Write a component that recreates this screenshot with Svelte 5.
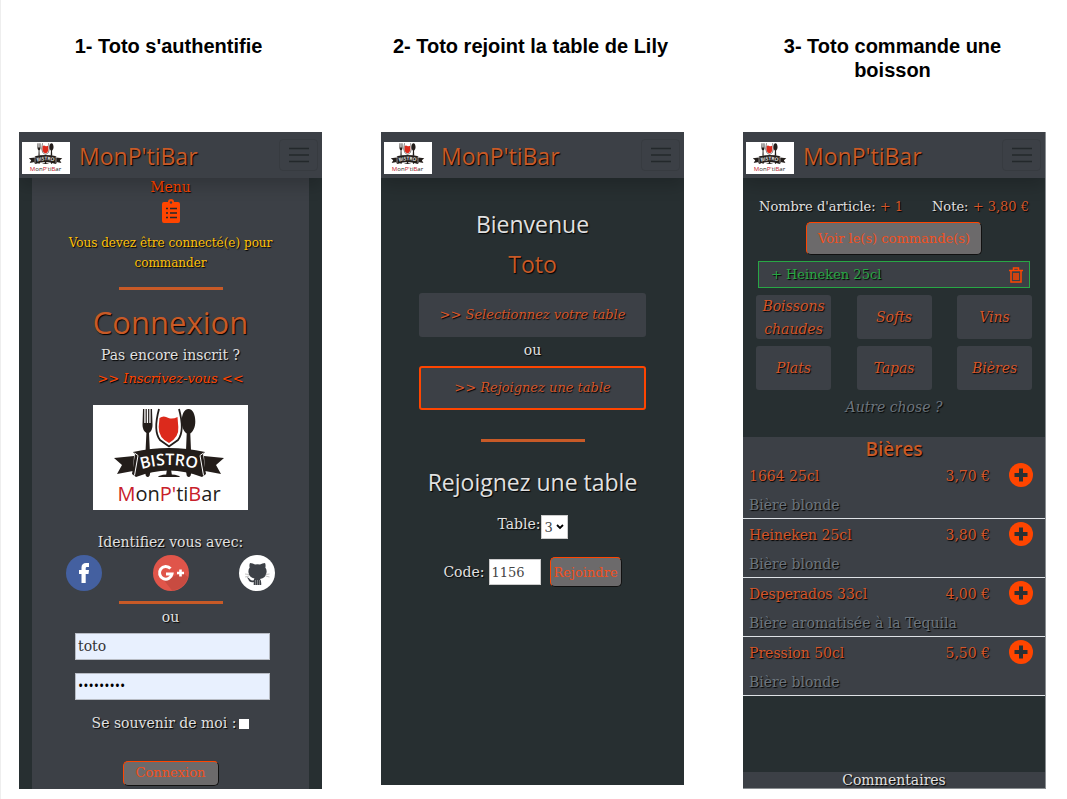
<script>
  const categories = ['Boissons chaudes', 'Softs', 'Vins', 'Plats', 'Tapas', 'Bières'];
  const beers = [
    { name: '1664 25cl', price: '3,70 €', note: 'Bière blonde' },
    { name: 'Heineken 25cl', price: '3,80 €', note: 'Bière blonde' },
    { name: 'Desperados 33cl', price: '4,00 €', note: 'Bière aromatisée à la Tequila' },
    { name: 'Pression 50cl', price: '5,50 €', note: 'Bière blonde' }
  ];
  let user = $state('toto');
  let password = $state('motdepass');
  let remember = $state(false);
  let table = $state('3');
  let code = $state('1156');
</script>

{#snippet logo(id)}
  <svg class="logo" viewBox="0 0 155 105" role="img" aria-label="Bistro MonP'tiBar">
    <rect width="155" height="105" fill="#fff" />
    <g fill="#231d1a">
      <path d="M50 4h1.300v14h1.300V4h1.200v14h1.300V4h1.200v14h1.300V4H59l.5 16q.2 5-3.500 8l.8 17h-4.200l.8-17q-4-3-3.900-8z" />
      <path d="M95.500 4c4.500 0 6.800 6 6.800 12.500 0 6-2.400 10-5 12l.7 17h-5l.7-17c-2.600-2-5-6-5-12C88.700 10 91 4 95.500 4z" />
      <path d="M52 66h5.500l-.8 4.500q-2 3-4 0zM93 66h5.500l-.8 4.500q-2 3-4 0zM74 64h4l.8 5.500q7.200.5 8.200 2.500H65q1-2 8.200-2.500z" />
      <path d="M41 51 21 53l8 7-5 9 16-3zM111 51l20 2-8 7 5 9-16-3z" />
      <path d="M40 47q36-8 72 0l-2 2 3 20-4 3q-33-13-66 0l-4-3 3-20z" />
    </g>
    <path d="m41.500 48 3.500 2.500-3.500 20M110.500 48l-3.500 2.500 3.500 20" fill="none" stroke="#fff" stroke-width="1" />
    <path d="M66.500 13q4-3 9 0 4 1.500 9-1l.8 10q1 10-9.300 16-10.500-5-10.300-16z" fill="#dc2a1c" />
    <path d="M66 4q-6 22 1 31l9 6.500 9-6.500q7-9 1-31" fill="none" stroke="#231d1a" stroke-width="1.800" />
    <path {id} d="M43 66q33-12 66 0" fill="none" />
    <text class="ribbon"><textPath href={'#' + id} startOffset="50%">BISTRO</textPath></text>
    <text class="word" x="76" y="96"><tspan class="red">M</tspan>on<tspan class="red">P'</tspan>ti<tspan class="red">B</tspan>ar</text>
  </svg>
{/snippet}

{#snippet nav(id)}
  <header class="nav">
    <span class="mini">{@render logo(id)}</span>
    <span class="brand">MonP'tiBar</span>
    <button class="burger" type="button" aria-label="Menu">
      <svg viewBox="0 0 20 16"><path d="M0 1.500h20M0 8h20M0 14.500h20" stroke="#23282b" stroke-width="1.600" /></svg>
    </button>
  </header>
{/snippet}

<main class="board">
  <h2 class="caption">1- Toto s'authentifie</h2>
  <h2 class="caption">2- Toto rejoint la table de Lily</h2>
  <h2 class="caption">3- Toto commande une boisson</h2>

  <section class="phone">
    {@render nav('arc-a')}
    <div class="login">
      <a class="menu" href="#menu">
        Menu
        <svg viewBox="0 0 18 24">
          <path fill="#ff4500" d="M2 3h4a3 3 0 0 1 6 0h4a2 2 0 0 1 2 2v17a2 2 0 0 1-2 2H2a2 2 0 0 1-2-2V5a2 2 0 0 1 2-2z" />
          <circle cx="9" cy="3.500" r="1.200" fill="#3c4046" />
          <path d="M4 9.500h2M8 9.500h7M4 14h2M8 14h7M4 18.500h2M8 18.500h7" stroke="#23282b" stroke-width="1.600" />
        </svg>
      </a>
      <p class="alert">Vous devez être connecté(e) pour commander</p>
      <hr />
      <h1>Connexion</h1>
      <p>Pas encore inscrit ?</p>
      <p><a class="signup" href="#inscription">&gt;&gt; Inscrivez-vous &lt;&lt;</a></p>
      <div class="big">{@render logo('arc-b')}</div>
      <p>Identifiez vous avec:</p>
      <div class="social">
        <a href="#facebook" aria-label="Facebook">
          <svg viewBox="0 0 36 36"><circle cx="18" cy="18" r="18" fill="#4460a0" /><path fill="#fff" d="M15.500 28V19H13v-4h2.500v-2.500c0-3 1.700-4.500 4.700-4.500H23v4h-1.700c-1 0-1.600.4-1.600 1.400V15H23l-.5 4h-2.800v9z" /></svg>
        </a>
        <a href="#google" aria-label="Google+">
          <svg viewBox="0 0 36 36"><circle cx="18" cy="18" r="18" fill="#e0554a" /><path fill="#b8443c" d="m10 24 9 11.500a18 18 0 0 0 16-13.500l-5-4-9 3z" opacity=".6" /><path fill="none" stroke="#fff" stroke-width="3" d="M17.500 13.600a6.300 6.300 0 1 0 1.500 5.400h-6" /><path stroke="#fff" stroke-width="2.600" d="M24 18h7M27.500 14.500v7" /></svg>
        </a>
        <a href="#github" aria-label="GitHub">
          <svg viewBox="0 0 36 36"><circle cx="18" cy="18" r="18" fill="#fff" /><path fill="#3c4046" d="M11 8q3 0 5 1.500 2.500-.7 5 0Q23.500 8 26 8q1 2.300.3 4.500 1.700 2 1.200 5-.7 5.500-6.500 6.500 1.500 1.500 1.200 6h-7.500v-3q-4.200 1-5.500-3-.5-1-1.500-1.500 2-.5 3.500 2 1.300 1.500 3.600.7 0-1 .7-1.700-5.300-1-6-6-.4-3 1.200-5Q10 10.300 11 8z" /><path d="M16.500 25v5M18.500 25v5M20.500 25v5" stroke="#aaa" stroke-width=".6" /><path d="M6 19l4 .5M6 22l4-1M30.500 19l-4 .5M30.500 22l-4-1" stroke="#999" stroke-width=".6" /></svg>
        </a>
      </div>
      <hr class="near" />
      <p class="or">ou</p>
      <form onsubmit={(e) => e.preventDefault()}>
        <input class="field" type="text" aria-label="Identifiant" bind:value={user} />
        <input class="field secret" type="password" aria-label="Mot de passe" bind:value={password} />
        <label class="remember">Se souvenir de moi : <input type="checkbox" bind:checked={remember} /></label>
        <button class="action connect" type="submit">Connexion</button>
      </form>
    </div>
  </section>

  <section class="phone">
    {@render nav('arc-c')}
    <div class="join">
      <h2>Bienvenue</h2>
      <h2 class="name">Toto</h2>
      <button class="tile wide" type="button">&gt;&gt; Selectionnez votre table</button>
      <p>ou</p>
      <button class="tile wide active" type="button">&gt;&gt; Rejoignez une table</button>
      <hr />
      <h2>Rejoignez une table</h2>
      <form onsubmit={(e) => e.preventDefault()}>
        <div class="line">
          <label for="table">Table:</label>
          <span class="select">
            <select id="table" bind:value={table}>
              <option>1</option><option>2</option><option>3</option><option>4</option>
            </select>
            <svg viewBox="0 0 8 6"><path d="m1 1 3 3 3-3" fill="none" stroke="#000" stroke-width="1.800" /></svg>
          </span>
        </div>
        <div class="line code">
          <label for="code">Code:</label>
          <input id="code" type="text" bind:value={code} />
          <button class="action" type="submit">Rejoindre</button>
        </div>
      </form>
    </div>
  </section>

  <section class="phone edged">
    {@render nav('arc-d')}
    <div class="order">
      <div class="totals">
        <span>Nombre d'article: <b>+ 1</b></span>
        <span>Note: <b>+ 3,80 €</b></span>
      </div>
      <button class="action view" type="button">Voir le(s) commande(s)</button>
      <div class="picked">
        <span>+ Heineken 25cl</span>
        <button type="button" aria-label="Supprimer">
          <svg viewBox="0 0 14 16"><path d="M0 3.500h14M4.500 3V1h5v2M2 4v11h10V4M5 6v7M7 6v7M9 6v7" fill="none" stroke="#ff4500" stroke-width="1.500" /></svg>
        </button>
      </div>
      <div class="grid">
        {#each categories as c}
          <button class="tile" type="button">{c}</button>
        {/each}
      </div>
      <p class="other">Autre chose ?</p>
    </div>
    <div class="list">
      <h3>Bières</h3>
      <ul>
        {#each beers as b}
          <li>
            <span class="item">{b.name}</span>
            <span class="price">{b.price}</span>
            <button class="add" type="button" aria-label={'Ajouter ' + b.name}>
              <svg viewBox="0 0 24 24"><circle cx="12" cy="12" r="12" fill="#ff4500" /><path d="M12 5.500v13M5.500 12h13" stroke="#2c3033" stroke-width="4" /></svg>
            </button>
            <span class="note">{b.note}</span>
          </li>
        {/each}
      </ul>
    </div>
    <footer>Commentaires</footer>
  </section>
</main>

<style>
  :global(body) { margin: 0; background: #fff; }
  * { box-sizing: border-box; }
  p, h1, h2, h3, ul { margin: 0; padding: 0; }
  svg { display: block; }
  a { text-decoration: none; color: #ff4500; }
  button { cursor: pointer; margin: 0; }
  button, input, select { font-family: inherit; font-size: 14px; border-radius: 0; }
  button { text-shadow: inherit; }

  .board {
    display: grid;
    grid-template-columns: repeat(3, minmax(0, 1fr));
    column-gap: 59px;
    padding: 34px 21px 10px 18px;
    border-left: 1px solid #eee;
  }
  .caption {
    padding: 0 12px 0 8px;
    margin-bottom: 50px;
    font: bold 20px/24px "Liberation Sans", Arial, sans-serif;
    text-align: center;
    color: #000;
  }
  .phone {
    display: flex;
    flex-direction: column;
    background: #272f31;
    color: #e1e1e1;
    font: 14px/23px "DejaVu Serif", serif;
    text-align: center;
    text-shadow: 1px 1px 1px #000;
    overflow: hidden;
  }
  .phone:nth-of-type(2) { margin-bottom: 4px; }
  .edged { border: solid #8a8e91; border-width: 0 1px 1px 0; }

  .nav {
    display: flex;
    align-items: center;
    height: 46px;
    padding: 0 4px 0 3px;
    background: #3c4046;
    box-shadow: 0 8px 16px rgba(0, 0, 0, 0.18);
    position: relative;
    flex: none;
  }
  .mini { width: 48px; margin-top: 6px; }
  .mini .logo { height: 32px; width: 48px; background: #fff; }
  .brand { margin: 2px 0 0 9px; font: 500 23px/32px "Open Sans", sans-serif; color: #c85a27; }
  .burger {
    display: grid;
    place-items: center;
    width: 39px;
    height: 32px;
    margin-left: auto;
    padding: 0;
    background: none;
    border: 1px solid #373b40;
    border-radius: 4px;
  }
  .burger svg { width: 20px; height: 16px; }

  .logo .ribbon { font: 600 16px "Open Sans", sans-serif; fill: #fff; text-anchor: middle; }
  .logo .word { font: 20px "Open Sans", sans-serif; fill: #231d1a; text-anchor: middle; }
  .logo .red { fill: #c8202a; }
  .logo { text-shadow: none; }

  hr { width: 104px; height: 3px; margin: 14px auto 13px; border: 0; background: #c85a27; }

  .login { flex: 1; margin: 0 13px; padding-bottom: 3px; background: #3c4046; }
  .menu { display: block; line-height: 18px; }
  .menu svg { width: 18px; height: 24px; margin: 3px auto 10px; }
  .alert { padding: 0 32px; font-size: 12px; line-height: 20px; color: #ffc107; }
  h1 { margin-bottom: 3px; font: 500 31px/38px "Open Sans", sans-serif; color: #c85a27; }
  .signup { font-size: 13px; font-style: italic; }
  .big { width: 155px; margin: 15px auto 21px; }
  .social { display: flex; justify-content: space-between; padding: 0 34px; margin-top: 1px; }
  .social svg { width: 36px; height: 36px; }
  hr.near { margin: 10px auto 2px; }
  .login form { display: flex; flex-direction: column; align-items: center; margin-top: 4px; }
  .field {
    width: 195px;
    height: 27px;
    margin: 0 0 13px 4px;
    padding: 0 2px 2px;
    border: 1px solid #b8bcc4;
    background: #e8f0fe;
    color: #333;
  }
  .secret { color: #000; font-family: "Open Sans", sans-serif; }
  .remember { display: flex; align-items: center; gap: 3px; margin: -1px 0 26px; }
  .remember input { width: 10px; height: 10px; margin: 0; appearance: none; background: #fff; }
  .remember input:checked { background: #ff4500; }

  .action {
    height: 30px;
    padding: 0 3px;
    font-size: 13px;
    color: #f0501e;
    background: #6c6a6b;
    border: 1px solid;
    border-color: #ff4500 #111 #111 #ff4500;
    border-radius: 5px;
    text-shadow: none;
  }
  .connect { width: 96px; height: 25px; padding-bottom: 2px; }

  .join { padding: 30px 38px 0; }
  .join h2 { font: 500 23px/32px "Open Sans", sans-serif; }
  .join .name { margin: 8px 0 13px; color: #c85a27; }
  .tile {
    height: 44px;
    padding: 0;
    border: 0;
    border-radius: 3px;
    background: #3c4046;
    color: #d4562a;
    font-style: italic;
    line-height: 23px;
  }
  .wide { display: block; width: 100%; padding-bottom: 2px; font-size: 13px; }
  .join p { margin: 2px 0 4px; }
  .active { border: 2px solid #ff4500; }
  .join hr { margin: 29px auto 24px; }
  .line { display: flex; justify-content: center; margin-top: 17px; }
  .line label { line-height: 19px; }
  .select { position: relative; }
  .select select {
    appearance: none;
    width: 27px;
    height: 24px;
    padding: 0 3px;
    background: #fff;
    border: 1px solid #ccc;
    color: #444;
    font-size: 13px;
  }
  .select svg { position: absolute; right: 4px; top: 9px; width: 8px; height: 6px; pointer-events: none; }
  .line.code { align-items: center; margin-top: 18px; }
  .code input { width: 52px; height: 26px; margin: 0 9px 0 4px; padding: 0 2px; border: 1px solid #ccc; color: #444; background: #fff; font-size: 13px; }

  .order { padding: 17px 13px 0; }
  .totals { display: flex; justify-content: space-between; padding: 0 3px; font-size: 13px; white-space: nowrap; }
  .totals b { font-weight: normal; color: #d4562a; }
  .view { width: 176px; height: 33px; margin: 4px 0 6px; }
  .picked {
    display: flex;
    align-items: center;
    justify-content: space-between;
    height: 27px;
    margin: 0 2px 7px;
    padding: 0 6px 0 12px;
    border: 1px solid #28a745;
    background: #3c4046;
    color: #28a745;
    font-size: 13px;
  }
  .picked button { padding: 0; border: 0; background: none; }
  .picked svg { width: 14px; height: 16px; }
  .grid { display: grid; grid-template-columns: repeat(3, 75px); justify-content: space-between; row-gap: 7px; }
  .other { margin: 6px 0 18px; font-style: italic; color: #6c757d; }
  .list { background: #3c4046; }
  h3 { font: 600 19px/24px "Open Sans", sans-serif; color: #c85a27; margin-bottom: -1px; }
  ul { list-style: none; }
  li {
    display: grid;
    grid-template-columns: 1fr auto 24px;
    gap: 5px 19px;
    padding: 0 12px 1px 6px;
    border-bottom: 1px solid #dee2e6;
    text-align: left;
    color: #d4562a;
  }
  li span { padding-top: 5px; }
  .note { grid-column: 1 / -1; padding: 0; margin-top: 1px; color: #6c757d; }
  .add { width: 24px; height: 24px; margin-top: 3px; padding: 0; border: 0; background: none; }
  footer { padding-top: 1px; margin-top: auto; line-height: 15px; background: #3c4046; }
</style>
